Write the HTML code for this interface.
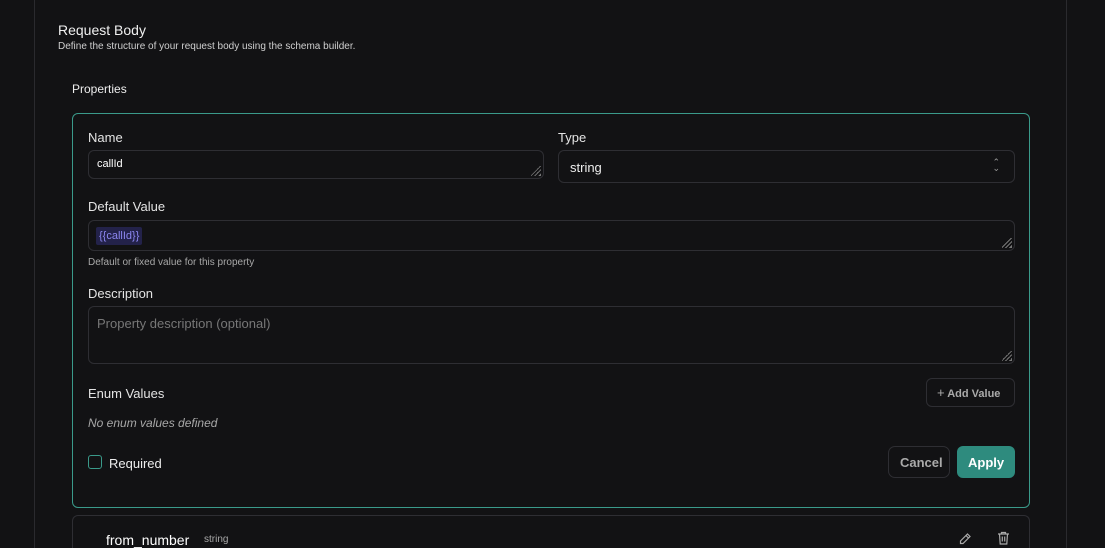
<!DOCTYPE html>
<html style="width:1105px;height:548px;overflow:hidden"><head><style>
*{box-sizing:border-box;margin:0;padding:0}
body{width:1105px;height:548px;background:#121214;font-family:"Liberation Sans",sans-serif;color:#e6e6e6;position:relative;overflow:hidden}
.a{position:absolute}
.vl{position:absolute;top:0;height:548px;width:1px;background:#2a2a2e}
.in{position:absolute;border:1px solid #2e2e33;border-radius:6px;background:#121214}
.lbl{font-size:13px;color:#e4e4e4}
.grip{position:absolute;right:2px;bottom:2px;width:10px;height:10px;background:linear-gradient(135deg,transparent 45%,#777 45%,#777 52%,transparent 52%,transparent 65%,#777 65%,#777 72%,transparent 72%,transparent 85%,#777 85%)}
</style></head><body>
<div class="vl" style="left:34px"></div>
<div class="vl" style="left:1066px"></div>
<div class="a" style="left:58px;top:22px;font-size:14px;color:#f0f0f0">Request Body</div>
<div class="a" style="left:58px;top:41px;font-size:10px;color:#cfcfcf">Define the structure of your request body using the schema builder.</div>
<div class="a" style="left:72px;top:82px;font-size:12px;color:#eee">Properties</div>

<div class="a" style="left:72px;top:113px;width:958px;height:395px;border:1px solid #3a9a8a;border-radius:6px"></div>
<div class="a lbl" style="left:88px;top:130px">Name</div>
<div class="in" style="left:88px;top:150px;width:456px;height:29px"><span class="a" style="left:8px;top:7px;font-size:11px;color:#fff">callId</span><div class="grip"></div></div>
<div class="a lbl" style="left:558px;top:130px">Type</div>
<div class="in" style="left:558px;top:150px;width:457px;height:33px"><span class="a" style="left:11px;top:9px;font-size:13px;color:#eee">string</span><span class="a" style="right:14px;top:8px;font-size:9px;color:#999;line-height:6px">⌃<br>⌄</span></div>
<div class="a lbl" style="left:88px;top:199px">Default Value</div>
<div class="in" style="left:88px;top:220px;width:927px;height:31px"><span class="a" style="left:7px;top:6px;height:18px;padding:3px 3px;background:#23224a;border-radius:2px;font-size:11px;color:#8c86f0">{{callId}}</span><div class="grip"></div></div>
<div class="a" style="left:88px;top:257px;font-size:10px;color:#a8a8a8">Default or fixed value for this property</div>
<div class="a lbl" style="left:88px;top:286px">Description</div>
<div class="in" style="left:88px;top:306px;width:927px;height:58px"><span class="a" style="left:8px;top:9px;font-size:13px;color:#777">Property description (optional)</span><div class="grip"></div></div>
<div class="a lbl" style="left:88px;top:386px">Enum Values</div>
<div class="in" style="left:926px;top:378px;width:89px;height:29px"><span class="a" style="left:10px;top:6px;font-size:11px;color:#aaa;font-weight:bold"><span style="font-weight:normal;font-size:13px">+</span> Add Value</span></div>
<div class="a" style="left:88px;top:416px;font-size:12px;color:#a8a8a8;font-style:italic">No enum values defined</div>
<div class="a" style="left:88px;top:455px;width:14px;height:14px;border:1.5px solid #3a9a8a;border-radius:3px"></div>
<div class="a" style="left:109px;top:456px;font-size:13px;color:#eee">Required</div>
<div class="in" style="left:888px;top:446px;width:62px;height:32px;border-radius:7px"><span class="a" style="left:11px;top:8px;font-size:13px;color:#aaa;font-weight:bold">Cancel</span></div>
<div class="a" style="left:957px;top:446px;width:58px;height:32px;border-radius:6px;background:#2e8b7e"><span class="a" style="left:11px;top:9px;font-size:13px;color:#fff;font-weight:bold">Apply</span></div>

<div class="a" style="left:72px;top:515px;width:958px;height:33px;border:1px solid #2e2e33;border-bottom:none;border-radius:6px 6px 0 0"></div>
<div class="a" style="left:106px;top:532px;font-size:14px;color:#fff">from_number</div>
<div class="a" style="left:204px;top:534px;font-size:10px;color:#a8a8a8">string</div>
<svg class="a" style="left:958px;top:532px" width="14" height="14" viewBox="0 0 14 14" fill="none" stroke="#aaa" stroke-width="1.2"><path d="M9.5 2l2.5 2.5-7 7H2.5V9z M8 3.5l2.5 2.5"/></svg>
<svg class="a" style="left:997px;top:531px" width="13" height="14" viewBox="0 0 13 14" fill="none" stroke="#aaa" stroke-width="1.2"><path d="M1 3h11 M4.5 3V1.5h4V3 M2.5 3l.7 10h6.6l.7-10 M5.3 5.5v5 M7.7 5.5v5"/></svg>
</body></html>
